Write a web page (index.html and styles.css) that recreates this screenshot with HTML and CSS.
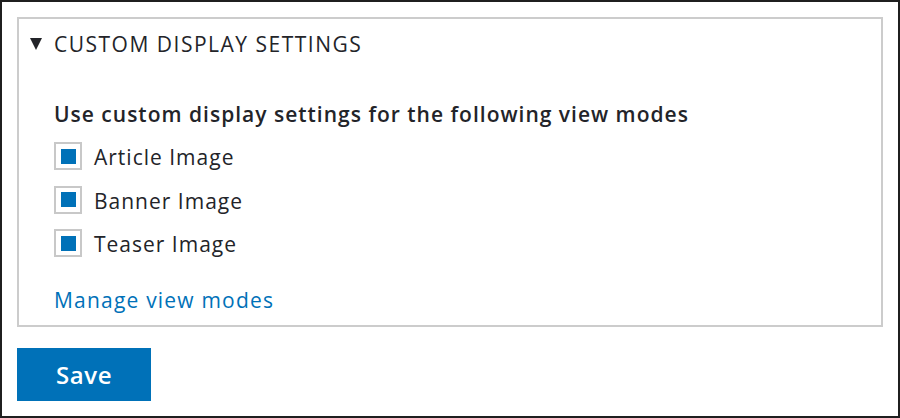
FILE: index.html
```html
<!DOCTYPE html>
<html>

<head>
    <meta charset="UTF-8">
    <title>Custom display settings</title>
    <link rel="stylesheet" href="styles.css">
</head>

<body>
    <div class="frame">
        <div class="details">
            <div class="summary">
                <span class="arrow"></span>
                <span class="summary-title">Custom display settings</span>
            </div>
            <div class="details-body">
                <div class="form-label">Use custom display settings for the following view modes</div>
                <div class="option">
                    <span class="checkbox checked"></span>
                    <span class="option-label">Article Image</span>
                </div>
                <div class="option">
                    <span class="checkbox checked"></span>
                    <span class="option-label">Banner Image</span>
                </div>
                <div class="option">
                    <span class="checkbox checked"></span>
                    <span class="option-label">Teaser Image</span>
                </div>
                <a class="link" href="#">Manage view modes</a>
            </div>
        </div>
        <button class="button">Save</button>
    </div>
</body>

</html>
```

FILE: styles.css
```css
html,
body {
    margin: 0;
    padding: 0;
    background: #fff;
}

body {
    font-family: "Open Sans", "Noto Sans", sans-serif;
    color: #232429;
}

.frame {
    box-sizing: border-box;
    width: 900px;
    height: 418px;
    border: 2px solid #1f1f1f;
    padding: 15px;
}

/* bloco recolhível (fieldset) */
.details {
    border: 2px solid #cccccc;
    padding: 11px 12px 11px 11px;
}

.summary {
    display: flex;
    align-items: center;
    font-size: 21px;
    line-height: 28px;
}

.arrow {
    width: 0;
    height: 0;
    border-left: 6.5px solid transparent;
    border-right: 6.5px solid transparent;
    border-top: 12px solid #232429;
    margin-right: 12px;
}

.summary-title {
    text-transform: uppercase;
    letter-spacing: 1.5px;
}

.details-body {
    padding: 42px 0 0 24px;
}

.form-label {
    font-size: 21px;
    font-weight: 600;
    line-height: 28px;
    letter-spacing: 1px;
    margin-bottom: 14px;
}

.option {
    display: flex;
    align-items: center;
    height: 28px;
    margin-bottom: 15.5px;
    font-size: 21px;
    letter-spacing: 1px;
}

.option-label {
    padding-top: 2px;
}

.checkbox {
    box-sizing: border-box;
    width: 28px;
    height: 28px;
    border: 2px solid #c8c8c8;
    display: flex;
    align-items: center;
    justify-content: center;
    margin-right: 12px;
}

.checkbox.checked::after {
    content: "";
    width: 15px;
    height: 15px;
    background: #0071b8;
}

.link {
    display: inline-block;
    margin-top: 13px;
    font-size: 21px;
    line-height: 28px;
    letter-spacing: 1.2px;
    color: #0071b8;
    text-decoration: none;
}

.button {
    margin-top: 21px;
    width: 134px;
    height: 53px;
    border: 0;
    background: #0071b8;
    color: #fff;
    font-family: "Open Sans", "Noto Sans", sans-serif;
    font-size: 24px;
    font-weight: 600;
    letter-spacing: 0.6px;
    padding: 0;
}
```
